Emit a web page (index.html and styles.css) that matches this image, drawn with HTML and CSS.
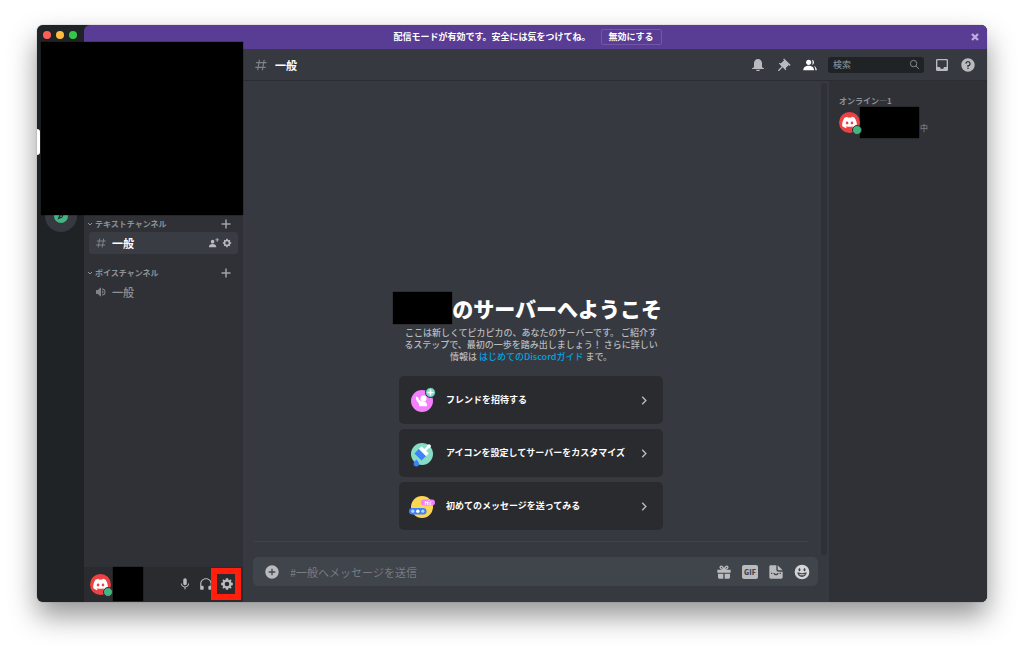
FILE: index.html
```html
<!DOCTYPE html>
<html lang="ja">
<head>
<meta charset="utf-8">
<title>一般</title>
<link rel="stylesheet" href="styles.css">
</head>
<body>
<svg class="sprite" aria-hidden="true">
  <symbol id="hash" viewBox="0 0 24 24"><path d="M5.887 21c-.311 0-.547-.281-.493-.587L6 17H2.595c-.31 0-.546-.28-.492-.586l.175-1A.5.5 0 0 1 2.77 15h3.58l1.06-6H4.005c-.31 0-.546-.28-.492-.586l.175-1A.5.5 0 0 1 4.18 7h3.58l.637-3.587A.5.5 0 0 1 8.889 3h.984c.311 0 .547.281.493.587L9.76 7h6l.637-3.587A.5.5 0 0 1 16.889 3h.984c.311 0 .547.281.493.587L17.76 7h3.405c.31 0 .546.28.492.586l-.175 1A.5.5 0 0 1 20.99 9h-3.58l-1.06 6h3.405c.31 0 .546.28.492.586l-.175 1a.5.5 0 0 1-.492.414H16l-.637 3.587a.5.5 0 0 1-.492.413h-.984c-.311 0-.547-.281-.493-.587L14 17H8l-.637 3.587a.5.5 0 0 1-.492.413zM9.41 9l-1.06 6h6l1.06-6z"/></symbol>
  <symbol id="bell" viewBox="0 0 24 24"><path d="M18 9v5c0 1.657 1.344 3 3 3v1H3v-1c1.656 0 3-1.343 3-3V9c0-3.314 2.686-6 6-6s6 2.686 6 6zm-6 12c-1.476 0-2.752-.81-3.445-2h6.89c-.693 1.19-1.969 2-3.445 2z"/></symbol>
  <symbol id="pin" viewBox="0 0 24 24"><path d="M22 12 12.101 2.101l-1.415 1.413 1.415 1.415-4.95 4.95-1.415-1.414L4.322 9.88l4.243 4.242-5.657 5.656 1.414 1.414 5.657-5.656 4.243 4.242 1.414-1.414-1.414-1.414L19.171 12l1.415 1.414z"/></symbol>
  <symbol id="people" viewBox="0 0 24 24"><path d="M14 8c0 2.205-1.794 4-4 4S6 10.205 6 8s1.794-4 4-4 4 1.795 4 4zM2 19c0-3.533 3.29-6 8-6s8 2.467 8 6v1H2zM20 20h2v-1c0-2.563-1.73-4.565-4.479-5.471C19.062 14.907 20 16.8 20 19zM14.883 11.902A4 4 0 0 0 18 8a4 4 0 0 0-3.503-3.968A6 6 0 0 1 16 8c0 1.454-.42 2.806-1.117 3.902z"/></symbol>
  <symbol id="inbox" viewBox="0 0 24 24"><path d="M19 3H5a2 2 0 0 0-2 2v14a2 2 0 0 0 2 2h14a2 2 0 0 0 2-2V5a2 2 0 0 0-2-2zm0 12h-4a3 3 0 0 1-6 0H5V5h14z"/></symbol>
  <symbol id="help" viewBox="0 0 24 24"><path d="M12 2C6.486 2 2 6.487 2 12c0 5.515 4.486 10 10 10s10-4.485 10-10c0-5.513-4.486-10-10-10zm0 16.250a1.250 1.250 0 1 1 0-2.500 1.250 1.250 0 0 1 0 2.500zm1-4.375V15h-2v-3h1c1.104 0 2-.897 2-2s-.896-2-2-2-2 .896-2 2H8c0-2.205 1.795-4 4-4s4 1.795 4 4c0 1.861-1.277 3.429-3 3.875z"/></symbol>
  <symbol id="gear" viewBox="0 0 24 24"><path fill-rule="evenodd" d="M19.738 10H22v4h-2.261a7.9 7.9 0 0 1-1.174 2.564L20 18l-2 2-1.435-1.436A7.9 7.9 0 0 1 14 19.738V22h-4v-2.262a7.9 7.9 0 0 1-2.564-1.174L6 20l-2-2 1.436-1.436A7.9 7.9 0 0 1 4.262 14H2v-4h2.262a7.9 7.9 0 0 1 1.174-2.564L4 6l2-2 1.436 1.436A7.9 7.9 0 0 1 10 4.262V2h4v2.261a7.9 7.9 0 0 1 2.565 1.174L18 4l2 2-1.436 1.436A7.9 7.9 0 0 1 19.738 10zM12 16a4 4 0 1 0 0-8 4 4 0 0 0 0 8z"/></symbol>
  <symbol id="mic" viewBox="0 0 24 24"><path d="M15 11a3 3 0 0 1-6 0V5a3 3 0 0 1 6 0zm-3 5.100c2.760 0 5.300-2.100 5.300-5.100H19c0 3.420-2.720 6.240-6 6.720V21h-2v-3.280C7.720 17.230 5 14.410 5 11h1.700c0 3 2.540 5.100 5.300 5.100z"/></symbol>
  <symbol id="phones" viewBox="0 0 24 24"><path d="M12 2C6.486 2 2 6.485 2 12v8a2 2 0 0 0 2 2h2a2 2 0 0 0 2-2v-3a2 2 0 0 0-2-2H4v-3c0-4.412 3.589-8 8-8s8 3.588 8 8v3h-2a2 2 0 0 0-2 2v3a2 2 0 0 0 2 2h2a2 2 0 0 0 2-2v-8c0-5.515-4.486-10-10-10z"/></symbol>
  <symbol id="speaker" viewBox="0 0 24 24"><path d="M11.383 3.079a1 1 0 0 0-1.090.217L6 8.002H3a1 1 0 0 0-1 1v6a1 1 0 0 0 1 1h3l4.293 4.708A1 1 0 0 0 12 20.002v-16a1 1 0 0 0-.617-.923zM14 5.002v2a5 5 0 0 1 0 10v2a7 7 0 0 0 0-14zm0 4v2a1 1 0 0 1 0 2v2a3 3 0 0 0 0-6z"/></symbol>
  <symbol id="plus" viewBox="0 0 24 24"><path d="M21 10.500h-7.500V3h-3v7.500H3v3h7.500V21h3v-7.500H21z"/></symbol>
  <symbol id="plus-circle" viewBox="0 0 24 24"><path d="M12 2C6.486 2 2 6.486 2 12s4.486 10 10 10 10-4.486 10-10S17.514 2 12 2zm5 11h-4v4h-2v-4H7v-2h4V7h2v4h4z"/></symbol>
  <symbol id="add-person" viewBox="0 0 24 24"><path d="M21 3h3v2h-3v3h-2V5h-3V3h3V0h2zM10 12a4 4 0 1 0 0-8 4 4 0 0 0 0 8zM10 13c-4.710 0-8 2.467-8 6v1h16v-1c0-3.533-3.289-6-8-6z"/></symbol>
  <symbol id="chevron-down" viewBox="0 0 24 24"><path fill="none" stroke="currentColor" stroke-width="4" d="m4 8 8 8 8-8"/></symbol>
  <symbol id="chevron-right" viewBox="0 0 24 24"><path fill="none" stroke="currentColor" stroke-width="3" d="m7 4 8 8-8 8"/></symbol>
  <symbol id="search" viewBox="0 0 24 24"><path fill="none" stroke="currentColor" stroke-width="2" d="M17 10a7 7 0 1 1-14 0 7 7 0 0 1 14 0zm-2 5 7 7"/></symbol>
  <symbol id="close" viewBox="0 0 24 24"><path fill="none" stroke="currentColor" stroke-width="7" d="m3 3 18 18M21 3 3 21"/></symbol>
  <symbol id="gift" viewBox="0 0 24 24"><path d="M2 8.500h20V13H2zM3 14.500h8V22H5a2 2 0 0 1-2-2zM13 14.500h8V20a2 2 0 0 1-2 2h-6z"/><path fill="none" stroke="currentColor" stroke-width="2" d="M12 8.500C10 3 7.500 2.500 6.500 3.800 5 5.800 8 8.500 12 8.500zm0 0c2-5.500 4.500-6 5.500-4.700C19 5.800 16 8.500 12 8.500z"/></symbol>
  <symbol id="sticker" viewBox="0 0 24 24"><path fill-rule="evenodd" d="M4 2h8.500v6.500a3 3 0 0 0 3 3H22V20a2 2 0 0 1-2 2H4a2 2 0 0 1-2-2V4c0-1.100.9-2 2-2zm.5 11v2h2v-2zm13 0v2h2v-2zM8 13.500c.5 2.300 2 3.500 4 3.500s3.500-1.200 4-3.500h-2c-.4 1.100-1 1.600-2 1.600s-1.600-.5-2-1.600z"/><path d="M14.500 2 22 9.500h-6a1.500 1.500 0 0 1-1.500-1.500z"/></symbol>
  <symbol id="smile" viewBox="0 0 24 24"><path fill-rule="evenodd" d="M12 1a11 11 0 1 0 0 22 11 11 0 0 0 0-22zM8.200 6.500c.9 0 1.500 1 1.500 2.200S9.100 11 8.200 11s-1.500-1-1.500-2.300.6-2.200 1.500-2.200zm7.600 0c.9 0 1.500 1 1.500 2.200s-.6 2.300-1.500 2.300-1.500-1-1.500-2.300.6-2.200 1.500-2.200zM5 12.500c2 .8 4.500 1.200 7 1.200s5-.4 7-1.200c0 4-3 7-7 7s-7-3-7-7zm2.500 2.400c.5.9 1.200 1.500 2 1.900 1.600.3 3.400.3 5 0 .8-.4 1.500-1 2-1.900-3 .6-6 .6-9 0z"/></symbol>
  <symbol id="logo" viewBox="0 0 32 32"><circle cx="16" cy="16" r="16" fill="#ed4245"/><path fill="#fff" transform="translate(4 7.400) scale(.86)" d="M23.021 1.677A21.600 21.600 0 0 0 17.658 0a15 15 0 0 0-.687 1.418 20 20 0 0 0-5.943 0A15 15 0 0 0 10.337.005a21.600 21.600 0 0 0-5.370 1.677C1.567 6.779.650 11.754 1.111 16.652A21.500 21.500 0 0 0 7.692 20a16 16 0 0 0 1.406-2.309 14 14 0 0 1-2.221-1.078l.547-.428a15.300 15.300 0 0 0 13.152 0l.541.428a14 14 0 0 1-2.220 1.078 16 16 0 0 0 1.405 2.303 21.500 21.500 0 0 0 6.587-3.347c.541-5.674-.923-10.600-3.868-14.970zM9.680 13.638c-1.282 0-2.339-1.193-2.339-2.644S8.372 8.350 9.680 8.350s2.360 1.193 2.339 2.644c0 1.451-1.036 2.644-2.339 2.644zm8.636 0c-1.283 0-2.340-1.193-2.340-2.644s1.036-2.644 2.340-2.644c1.302 0 2.359 1.193 2.338 2.644 0 1.451-1.036 2.644-2.338 2.644z"/></symbol>
</svg>

<div class="window">
  <nav class="rail" aria-label="サーバー">
    <div class="lights"><span class="light light-red"></span><span class="light light-yellow"></span><span class="light light-green"></span></div>
    <span class="pill"></span>
    <button class="explore" aria-label="公開サーバーを探す">
      <svg class="icon-14" viewBox="0 0 24 24"><circle cx="12" cy="12" r="12" fill="#43b581"/><path fill="#25302f" d="m18 6-3.600 8.400L6 18l3.600-8.400z"/><circle cx="12" cy="12" r="1.500" fill="#43b581"/></svg>
    </button>
  </nav>

  <div class="app">
    <div class="banner">
      <div class="banner-content">
        <span>配信モードが有効です。安全には気をつけてね。</span>
        <button class="banner-button">無効にする</button>
      </div>
      <button class="banner-close" aria-label="閉じる"><svg class="icon-8"><use href="#close"/></svg></button>
    </div>

    <div class="columns">
      <aside class="sidebar">
        <div class="channels">
          <section class="group">
            <div class="category"><svg class="icon-6"><use href="#chevron-down"/></svg><h2 class="category-name">テキストチャンネル</h2><button aria-label="テキストチャンネルを作成"><svg class="icon-12"><use href="#plus"/></svg></button></div>
            <div class="channel channel-active">
              <svg class="icon-12 channel-icon"><use href="#hash"/></svg>
              <a class="channel-name" href="#text">一般</a>
              <button aria-label="招待を作成"><svg class="icon-11"><use href="#add-person"/></svg></button>
              <button aria-label="チャンネルの編集"><svg class="icon-10"><use href="#gear"/></svg></button>
            </div>
          </section>
          <section class="group">
            <div class="category"><svg class="icon-6"><use href="#chevron-down"/></svg><h2 class="category-name">ボイスチャンネル</h2><button aria-label="ボイスチャンネルを作成"><svg class="icon-12"><use href="#plus"/></svg></button></div>
            <div class="channel">
              <svg class="icon-12 channel-icon"><use href="#speaker"/></svg>
              <a class="channel-name" href="#voice">一般</a>
            </div>
          </section>
        </div>
        <div class="user">
          <span class="avatar"><svg class="icon-21"><use href="#logo"/></svg><i class="status status-panel"></i></span>
          <span class="redacted redacted-user"></span>
          <div class="user-buttons">
            <button aria-label="ミュート"><svg class="icon-14"><use href="#mic"/></svg></button>
            <button aria-label="スピーカーミュート"><svg class="icon-14"><use href="#phones"/></svg></button>
            <button aria-label="ユーザー設定" class="settings"><svg class="icon-14"><use href="#gear"/></svg><span class="highlight"></span></button>
          </div>
        </div>
      </aside>

      <main class="main">
        <header class="header">
          <svg class="icon-14 channel-icon"><use href="#hash"/></svg>
          <h1 class="header-name">一般</h1>
          <div class="toolbar">
            <button aria-label="通知設定"><svg class="icon-16"><use href="#bell"/></svg></button>
            <button aria-label="ピン留め"><svg class="icon-16"><use href="#pin"/></svg></button>
            <button aria-label="メンバーリスト" class="selected"><svg class="icon-16"><use href="#people"/></svg></button>
            <label class="search"><input type="text" placeholder="検索" aria-label="検索"><svg class="icon-11"><use href="#search"/></svg></label>
            <button aria-label="受信ボックス"><svg class="icon-16"><use href="#inbox"/></svg></button>
            <button aria-label="ヘルプ"><svg class="icon-16"><use href="#help"/></svg></button>
          </div>
        </header>

        <div class="content">
          <div class="chat">
            <div class="scroller">
              <div class="messages">
                <div class="welcome">
                  <h2 class="welcome-title"><span class="redacted redacted-title"></span>のサーバーへようこそ</h2>
                  <p class="welcome-text">ここは新しくてピカピカの、あなたのサーバーです。 ご紹介す<br>るステップで、最初の一歩を踏み出しましょう！ さらに詳しい<br>情報は <a href="#guide">はじめてのDiscordガイド</a> まで。</p>
                  <button class="card">
                    <svg class="card-icon" viewBox="0 0 28 28"><circle cx="13" cy="15" r="11" fill="#f47fff"/><circle cx="14.500" cy="12.500" r="3" fill="#fff"/><path fill="#fff" d="M6.800 10.800c1.400-.4 2.100.2 2.600 1.500.5 1.400 1.400 2.500 3.400 3h2c2.300.3 3.200 1.800 3.200 4.900H10v-2.600c-2-1.600-3.200-3.600-3.200-6.800z"/><circle cx="21.500" cy="6.500" r="5" fill="#78dac2" stroke="#292b2f" stroke-width="1"/><path stroke="#fff" stroke-width="1.600" d="M21.500 3.500v6M18.500 6.500h6"/></svg>
                    <span class="card-label">フレンドを招待する</span><svg class="icon-11 card-arrow"><use href="#chevron-right"/></svg>
                  </button>
                  <button class="card">
                    <svg class="card-icon" viewBox="0 0 28 28"><circle cx="13" cy="15" r="11" fill="#86dcc5"/><g transform="rotate(45 13 14)"><path fill="#fff" d="M8 9.500h3.800V6.700c0-1-.6-1.400-.6-2.500a1.900 1.900 0 0 1 3.800 0c0 1.100-.6 1.500-.6 2.500v2.800H18v4H8z"/><path fill="#3e82f7" d="M8 13.500h10v6.200H8z"/></g><path fill="#3e82f7" d="M7.300 20.500c1.600 1.700 2.700 3 2.700 4.200a2.700 2.700 0 0 1-5.400 0c0-1.200 1.100-2.500 2.700-4.200z"/></svg>
                    <span class="card-label">アイコンを設定してサーバーをカスタマイズ</span><svg class="icon-11 card-arrow"><use href="#chevron-right"/></svg>
                  </button>
                  <button class="card">
                    <svg class="card-icon" viewBox="0 0 28 28"><circle cx="13" cy="15" r="11" fill="#fdd753"/><rect x="12" y="7.500" width="14" height="6" rx="3" fill="#f47fff"/><text class="hi" x="19" y="12.500" text-anchor="middle">Hi!</text><rect x="0" y="16" width="17.500" height="6.500" rx="3.200" fill="#3e82f7"/><circle cx="3.800" cy="19.200" r="1.600" fill="#b9d4ff"/><circle cx="8.800" cy="19.200" r="1.700" fill="#fff"/><circle cx="13.800" cy="19.200" r="1.600" fill="#b9d4ff"/></svg>
                    <span class="card-label">初めてのメッセージを送ってみる</span><svg class="icon-11 card-arrow"><use href="#chevron-right"/></svg>
                  </button>
                </div>
              </div>
              <span class="scrollbar"></span>
            </div>
            <form class="composer">
              <button type="button" aria-label="ファイルを追加"><svg class="icon-16"><use href="#plus-circle"/></svg></button>
              <input type="text" placeholder="#一般へメッセージを送信" aria-label="#一般へメッセージを送信">
              <button type="button" aria-label="ギフト"><svg class="icon-16"><use href="#gift"/></svg></button>
              <button type="button" class="gif">GIF</button>
              <button type="button" aria-label="スタンプ"><svg class="icon-16"><use href="#sticker"/></svg></button>
              <button type="button" aria-label="絵文字" class="emoji"><svg class="icon-16"><use href="#smile"/></svg></button>
            </form>
          </div>
          <aside class="members">
            <h2 class="members-title">オンライン—1</h2>
            <div class="member">
              <span class="avatar"><svg class="icon-21"><use href="#logo"/></svg><i class="status"></i></span>
              <span class="redacted redacted-member"></span>
              <span class="activity">中</span>
            </div>
          </aside>
        </div>
      </main>
    </div>
  </div>
  <div class="redacted redacted-servers"></div>
</div>
</body>
</html>
```
FILE: styles.css
```css
* {
  box-sizing: border-box;
}

body {
  margin: 0;
  height: 100vh;
  padding: 25px 37px 49px;
  background: #fff;
  color: #dcddde;
  font-family: "Noto Sans CJK JP", sans-serif;
  font-size: 9px;
  line-height: 12px;
}

h1, h2, p {
  margin: 0;
}

a {
  color: inherit;
  text-decoration: none;
}

button {
  display: flex;
  align-items: center;
  justify-content: center;
  flex: none;
  margin: 0;
  padding: 0;
  border: 0;
  background: none;
  color: #b9bbbe;
  font: inherit;
}

input {
  flex: 1;
  min-width: 0;
  padding: 0;
  border: 0;
  outline: 0;
  background: none;
  color: #dcddde;
  font: inherit;
}

svg {
  display: block;
  flex: none;
  fill: currentColor;
}

.sprite { position: absolute; width: 0; height: 0; }
.icon-6 { width: 6px; height: 6px; }
.icon-8 { width: 8px; height: 8px; }
.icon-10 { width: 10px; height: 10px; }
.icon-11 { width: 11px; height: 11px; }
.icon-12 { width: 12px; height: 12px; }
.icon-14 { width: 14px; height: 14px; }
.icon-16 { width: 16px; height: 16px; }
.icon-21 { width: 21px; height: 21px; }

.window {
  position: relative;
  display: flex;
  height: 100%;
  border-radius: 6px;
  background: #202326;
  box-shadow: 0 0 1px rgba(0, 0, 0, .6), 0 14px 28px rgba(0, 0, 0, .42);
}

.redacted {
  flex: none;
  background: #000;
  box-shadow: 0 0 1px #000;
}

.redacted-servers {
  position: absolute;
  top: 17px;
  left: 4px;
  width: 202px;
  height: 173px;
}

/* Server rail */
.rail {
  display: flex;
  flex-direction: column;
  flex: none;
  width: 47px;
  padding-top: 6px;
}

.lights {
  display: flex;
  gap: 5px;
  padding-left: 6px;
}

.light {
  width: 8px;
  height: 8px;
  border-radius: 50%;
}

.light-red { background: #ff5f57; }
.light-yellow { background: #febc40; }
.light-green { background: #34c84a; }

.pill {
  width: 3px;
  height: 26px;
  margin: 90px 0 45px;
  border-radius: 0 3px 3px 0;
  background: #fff;
}

.explore {
  width: 32px;
  height: 32px;
  margin-left: 8px;
  border-radius: 50%;
  background: #36393f;
}

.app {
  display: flex;
  flex-direction: column;
  flex: 1;
  min-width: 0;
  overflow: hidden;
  border-radius: 6px 6px 6px 0;
}

/* Streamer mode banner */
.banner {
  display: flex;
  align-items: center;
  flex: none;
  height: 24px;
  padding-right: 8px;
  background: #593c94;
  color: #fff;
  font-weight: 700;
}

.banner-content {
  display: flex;
  align-items: center;
  justify-content: center;
  flex: 1;
  gap: 10px;
}

.banner-button {
  height: 16px;
  padding: 0 7px;
  border: 1px solid #7256a8;
  border-radius: 2px;
  color: #fff;
}

.banner-close {
  color: #bcaedb;
}

.columns {
  display: flex;
  flex: 1;
  min-height: 0;
}

/* Channel sidebar */
.sidebar {
  display: flex;
  flex-direction: column;
  flex: none;
  width: 159px;
  background: #2f3136;
}

.channels {
  display: flex;
  flex-direction: column;
  flex: 1;
  gap: 10px;
  padding-top: 166px;
  color: #8e9297;
}

.category {
  display: flex;
  align-items: center;
  gap: 2px;
  height: 17px;
  padding: 0 11px 0 3px;
}

.category button {
  color: #a0a3a8;
}

.category-name {
  flex: 1;
  font-size: 8px;
  font-weight: 700;
}

.channel {
  display: flex;
  align-items: center;
  gap: 3px;
  height: 22px;
  margin: 0 5px;
  padding: 0 6px;
  border-radius: 3px;
  font-size: 11px;
  font-weight: 500;
}

.channel-active {
  background: #393c43;
  color: #fff;
  font-weight: 700;
}

.channel-icon {
  color: #7f8389;
}

.channel-name {
  flex: 1;
  padding-left: 2px;
}

.user {
  display: flex;
  align-items: center;
  flex: none;
  height: 35px;
  padding: 0 9px 1px 6px;
  background: #292b2f;
}

.avatar {
  position: relative;
  flex: none;
}

.status {
  position: absolute;
  right: -2px;
  bottom: -2px;
  width: 10px;
  height: 10px;
  border: 1px solid #2f3136;
  border-radius: 50%;
  background: #43b581;
}

.status-panel {
  border-color: #292b2f;
}

.redacted-user {
  width: 30px;
  height: 34px;
  margin-left: 2px;
}

.user-buttons {
  display: flex;
  gap: 7px;
  margin-left: auto;
}

.settings {
  position: relative;
}

.highlight {
  position: absolute;
  inset: -9px -7px -9px -9px;
  border: 6px solid #ff1f0c;
}

/* Main area */
.main {
  display: flex;
  flex-direction: column;
  flex: 1;
  min-width: 0;
  background: #36393f;
}

.header {
  display: flex;
  align-items: center;
  flex: none;
  gap: 7px;
  height: 32px;
  padding: 0 11px;
  border-bottom: 1px solid #2b2d32;
}

.header-name {
  color: #fff;
  font-size: 11px;
  font-weight: 700;
}

.toolbar {
  display: flex;
  align-items: center;
  gap: 10px;
  margin-left: auto;
}

.selected {
  color: #fff;
}

.search {
  display: flex;
  align-items: center;
  width: 96px;
  height: 16px;
  padding: 0 4px 0 5px;
  border-radius: 3px;
  background: #202326;
  color: #8e9297;
}

input::placeholder {
  color: #777b82;
  opacity: 1;
}

.search input::placeholder {
  color: #96989d;
}

.content {
  display: flex;
  flex: 1;
  min-height: 0;
}

.chat {
  display: flex;
  flex-direction: column;
  flex: 1;
  min-width: 0;
}

.scroller {
  display: flex;
  flex: 1;
  min-height: 0;
  gap: 13px;
  padding: 2px 2px 2px 11px;
}

.scrollbar {
  flex: none;
  width: 6px;
  border-radius: 3px;
  background: #2e3136;
}

.messages {
  display: flex;
  flex-direction: column;
  justify-content: flex-end;
  align-items: center;
  flex: 1;
  margin-bottom: 13px;
  padding-bottom: 11px;
  border-bottom: 1px solid #3f4248;
}

.welcome {
  display: flex;
  flex-direction: column;
  gap: 5px;
  width: 264px;
}

.welcome-title {
  display: flex;
  align-items: center;
  justify-content: flex-end;
  height: 32px;
  padding-right: 1px;
  color: #fff;
  font-size: 21px;
  font-weight: 900;
  line-height: 32px;
  white-space: nowrap;
}

.redacted-title {
  width: 59px;
  height: 32px;
}

.welcome-text {
  margin: -2px 0 8px;
  color: #b9bbbe;
  font-weight: 500;
  text-align: center;
  white-space: nowrap;
}

.welcome-text a {
  color: #00a5e6;
}

.card {
  justify-content: flex-start;
  height: 48px;
  padding: 0 13px 0 10px;
  border-radius: 5px;
  background: #292b2f;
  color: #fff;
  font-weight: 700;
}

.card-icon {
  width: 28px;
  height: 28px;
}

.card-label {
  flex: 1;
  padding-left: 9px;
  text-align: left;
}

.card-arrow {
  color: #b9bbbe;
}

.hi {
  fill: #fff;
  font-size: 5px;
  font-weight: 700;
}

.composer {
  display: flex;
  align-items: center;
  flex: none;
  gap: 10px;
  height: 29px;
  margin: 0 11px 16px 10px;
  padding: 0 8px 0 11px;
  border-radius: 5px;
  background: #40444b;
  font-size: 11px;
}

.gif {
  width: 16px;
  height: 14px;
  border-radius: 2px;
  background: #b9bbbe;
  color: #40444b;
  font-size: 7px;
  font-weight: 900;
}

.emoji {
  color: #d4d5d7;
}

/* Member list */
.members {
  flex: none;
  width: 158px;
  padding: 14px 10px;
  background: #2f3136;
  color: #8e9297;
  font-size: 8px;
}

.members-title {
  font-size: 8px;
  font-weight: 700;
}

.member {
  display: flex;
  align-items: center;
}

.redacted-member {
  width: 59px;
  height: 31px;
}

.activity {
  padding: 10px 0 0 1px;
}
```
